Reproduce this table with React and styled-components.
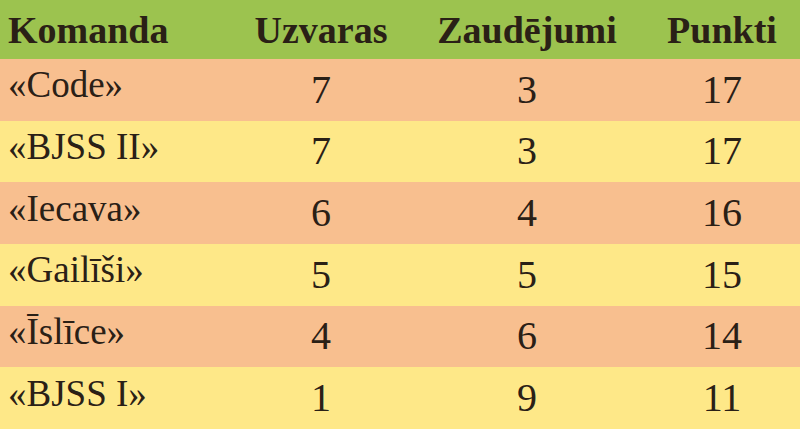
import React from "react";
import styled, { createGlobalStyle } from "styled-components";

const Global = createGlobalStyle`
  html, body { margin: 0; padding: 0; background: #ffffff; }
  #root { width: 800px; height: 429px; overflow: hidden; }
`;

const COLS = "250px 142px 270px 120px 18px";

const Table = styled.div`
  width: 800px;
  height: 429px;
  display: grid;
  grid-template-rows: 59px repeat(6, 1fr);
  font-family: "Liberation Serif", "Times New Roman", Times, serif;
  color: #2a2016;
`;

const Row = styled.div`
  display: grid;
  grid-template-columns: ${COLS};
  align-items: center;
  background: ${(p) => p.$bg};
`;

const HeadCell = styled.div`
  font-size: 38px;
  font-weight: bold;
  text-align: ${(p) => (p.$left ? "left" : "center")};
  padding-left: ${(p) => (p.$left ? "8px" : "0")};
  line-height: 1;
`;

const NameCell = styled.div`
  font-size: 37px;
  line-height: 1;
  padding-left: 8px;
  padding-bottom: 10px;
  white-space: nowrap;
`;

const NumCell = styled.div`
  font-size: 40px;
  line-height: 1;
  text-align: center;
`;

const GREEN = "#9cc34f";
const ORANGE = "#f8bf8f";
const YELLOW = "#fee888";

const data = [
  ["«Code»", 7, 3, 17],
  ["«BJSS II»", 7, 3, 17],
  ["«Iecava»", 6, 4, 16],
  ["«Gailīši»", 5, 5, 15],
  ["«Īslīce»", 4, 6, 14],
  ["«BJSS I»", 1, 9, 11],
];

export default function App() {
  return (
    <>
      <Global />
      <Table>
        <Row $bg={GREEN}>
          <HeadCell $left>Komanda</HeadCell>
          <HeadCell>Uzvaras</HeadCell>
          <HeadCell>Zaudējumi</HeadCell>
          <HeadCell>Punkti</HeadCell>
        </Row>
        {data.map((r, i) => (
          <Row key={i} $bg={i % 2 === 0 ? ORANGE : YELLOW}>
            <NameCell>{r[0]}</NameCell>
            <NumCell>{r[1]}</NumCell>
            <NumCell>{r[2]}</NumCell>
            <NumCell>{r[3]}</NumCell>
          </Row>
        ))}
      </Table>
    </>
  );
}
